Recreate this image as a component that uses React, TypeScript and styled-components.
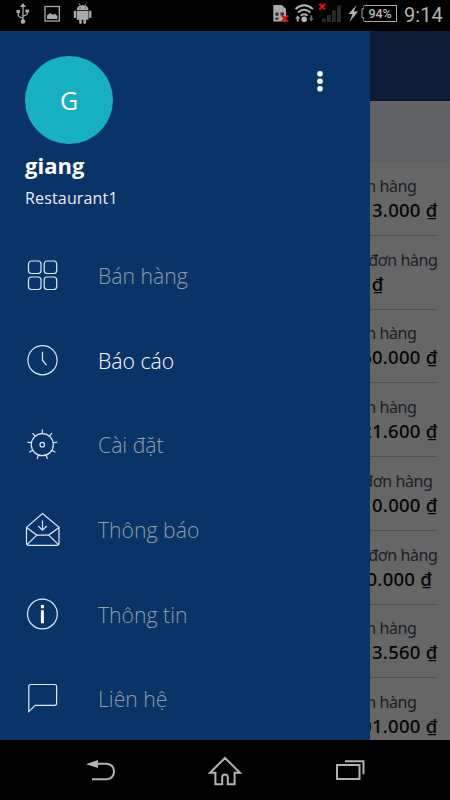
import React from "react";
import styled, { createGlobalStyle } from "styled-components";

const Global = createGlobalStyle`
  * { box-sizing: border-box; }
  body { margin: 0; background: #000; font-family: "Open Sans", "Noto Sans", sans-serif; }
`;

const Screen = styled.div`
  width: 450px;
  height: 800px;
  display: flex;
  flex-direction: column;
  overflow: hidden;
  background: #000;
`;

const StatusBar = styled.header`
  height: 31px;
  flex: none;
  display: flex;
  justify-content: space-between;
`;

const StatusIcons = styled.svg`
  display: block;
  height: 31px;
  flex: none;
`;

const StatusRight = styled.div`
  display: flex;
`;

const Clock = styled.time`
  width: 46px;
  font: 400 20px/30px Roboto, sans-serif;
  letter-spacing: 0.1px;
  color: #b4b4b4;
`;

const Battery = styled.div`
  width: 33px;
  height: 17px;
  margin: 5px 7px 0 0;
  border: 1px solid #aaa;
  border-left-width: 0;
  border-radius: 1px;
  font: 500 12.5px/16px Roboto, sans-serif;
  letter-spacing: -0.2px;
  text-align: center;
  color: #bcbcbc;
`;

const Main = styled.main`
  height: 709px;
  flex: none;
  display: flex;
`;

const Drawer = styled.aside`
  width: 370px;
  flex: none;
  background: #0a3467;
`;

const Profile = styled.section`
  height: 202px;
  display: flex;
  justify-content: space-between;
  padding: 25px 46px 0 25px;
  color: #fff;
`;

const Avatar = styled.div`
  width: 88px;
  height: 88px;
  border-radius: 50%;
  background: #16b0c1;
  font-size: 25px;
  line-height: 89px;
  text-align: center;
`;

const Name = styled.div`
  margin-top: 6px;
  font-size: 22px;
  line-height: 30px;
  font-weight: 700;
`;

const Place = styled.div`
  margin-top: 6px;
  font-size: 16px;
  line-height: 24px;
  letter-spacing: 0.16px;
  color: #e9eef6;
`;

const More = styled.svg`
  width: 8px;
  height: 22px;
  margin-top: 14px;
`;

const Item = styled.a<{ $active?: boolean }>`
  height: 84.7px;
  display: flex;
  align-items: center;
  gap: 37px;
  padding-left: 24px;
  font-size: 21.2px;
  font-weight: 300;
  white-space: nowrap;
  color: ${(p) => (p.$active ? "#ffffff" : "#929ca6")};
`;

const ItemIcon = styled.svg`
  width: 37px;
  height: 37px;
  flex: none;
  fill: none;
  stroke: #dfe8f6;
  stroke-width: 1.2;
`;

const Backdrop = styled.section`
  width: 80px;
  overflow: hidden;
  background: #666;
`;

const AppBar = styled.div`
  height: 70px;
  background: #0d1c36;
  border-bottom: 1px solid #061334;
`;

const FilterBand = styled.div`
  height: 61px;
  background: #616264;
  border-bottom: 1px solid #5d5d5e;
`;

const Order = styled.div`
  height: 73.75px;
  width: 67px;
  padding-top: 11.8px;
  border-bottom: 1px solid #505050;
`;

const Line = styled.div<{ $end: number }>`
  width: ${(p) => p.$end}px;
  display: flex;
  justify-content: flex-end;
  white-space: pre;
`;

const Label = styled(Line)`
  font: 400 16px/24px "Noto Sans", sans-serif;
  letter-spacing: -0.4px;
  color: #191e27;
`;

const Amount = styled(Line)`
  font: 500 18.5px/23px "Noto Sans", sans-serif;
  letter-spacing: 0.25px;
  color: #050505;
`;

const NavBar = styled.footer`
  height: 60px;
  flex: none;
`;

const NavIcons = styled.svg`
  display: block;
  fill: none;
  stroke: #b2b2b2;
  stroke-width: 2;
`;

const teeth = Array.from({ length: 9 }, (_, i) => i * 40);

const menu = [
  {
    text: "Bán hàng",
    icon: (
      <>
        <rect x="4.5" y="4" width="12.5" height="12.5" rx="3" />
        <rect x="20.2" y="4" width="12.5" height="12.5" rx="3" />
        <rect x="4.5" y="20" width="12.5" height="12.5" rx="3" />
        <rect x="20.2" y="20" width="12.5" height="12.5" rx="3" />
      </>
    ),
  },
  {
    text: "Báo cáo",
    active: true,
    icon: (
      <>
        <circle cx="18.5" cy="18.2" r="14.6" />
        <path d="M18.5 9.7v8.5l4 5" />
      </>
    ),
  },
  {
    text: "Cài đặt",
    icon: (
      <>
        <circle cx="18.3" cy="18.7" r="11" />
        <circle cx="18.3" cy="18.7" r="2.3" />
        {teeth.map((a) => (
          <path key={a} d="M18.3 7.7V3.6" transform={`rotate(${a} 18.3 18.7)`} />
        ))}
      </>
    ),
  },
  {
    text: "Thông báo",
    icon: (
      <>
        <path d="M2.5 16.4 18.5 2.5 35 16.4V32q0 2.3-2.3 2.3H4.8Q2.5 34.3 2.5 32ZM2.5 16.4l10.3 7.7h11.9L35 16.4M3 33.6l9.8-9.5M34.5 33.6l-9.8-9.5" />
        <path d="M18.5 9.6v9M14.2 15l4.3 4.2 4.3-4.2" />
      </>
    ),
  },
  {
    text: "Thông tin",
    icon: (
      <>
        <circle cx="18.4" cy="18" r="14.9" />
        <path d="M18.4 9v3.3M18.4 14.2v13" stroke="#fff" strokeWidth="3" />
      </>
    ),
  },
  {
    text: "Liên hệ",
    icon: (
      <path d="M6.8 4.5h23.8q2 0 2 2v16.8q0 2-2 2H11.2L4.8 31.6V6.5q0-2 2-2Z" />
    ),
  },
];

const orders = [
  { label: "n hàng", labelEnd: 46.5, amount: "3.000 ₫", end: 67.5 },
  { label: "đơn hàng", labelEnd: 67.5, amount: "₫", end: 13.5 },
  { label: "n hàng", labelEnd: 46.5, amount: "60.000 ₫", end: 67.5 },
  { label: "n hàng", labelEnd: 46.5, amount: "21.600 ₫", end: 67.5 },
  { label: "đơn hàng", labelEnd: 62.5, amount: "0.000 ₫", end: 67.5 },
  { label: "đơn hàng", labelEnd: 67.5, amount: "0.000 ₫", end: 62 },
  { label: "n hàng", labelEnd: 46.5, amount: "3.560 ₫", end: 67.5 },
  { label: "n hàng", labelEnd: 46.5, amount: "01.000 ₫", end: 67.5 },
];

export default function App() {
  return (
    <Screen>
      <Global />
      <StatusBar>
        <StatusIcons width="100" viewBox="0 0 100 31">
          <g fill="none" stroke="#aaa" strokeWidth="1.3">
            <path d="M23 6v16M18.3 11v4.2q0 2 4.7 2.7M27.3 10v3.3q0 2-4.3 2.7" />
            <rect x="45" y="6.5" width="14.3" height="14.5" />
          </g>
          <g fill="#aaa">
            <path d="m23 3 3 4h-6zM16.5 10h3.5v3h-3.5zM25.5 9.5H29v3h-3.5z" />
            <circle cx="23" cy="21.5" r="2.3" />
            <path d="M47 19v-3.5l3-2.5 3 1.8 2-1 2.5 2.2v3z" />
            <path d="M76.7 10q0-4.7 5.9-4.7T88.5 10zM76.7 10.8h11.8v9H86v3.5q-1.5 1.5-2.6 0v-3.5h-1.6v3.5q-1.4 1.5-2.6 0v-3.5h-2.5zM73.8 11q1.2-1 2.3 0v6.5q-1.1 1-2.3 0zM89.1 11q1.2-1 2.3 0v6.5q-1.1 1-2.3 0z" />
          </g>
          <path d="m79 3.5 1.3 2M86.3 3.5 85 5.5" stroke="#aaa" />
          <path d="M79.5 8h1M84.7 8h1" stroke="#111" />
        </StatusIcons>
        <StatusRight>
          <StatusIcons width="102" viewBox="262 0 102 31">
            <path fill="#aaa" d="M273.3 5h8.5l4.2 4v12.5h-12.7z" />
            <path d="M275.3 12.5h3.2v3.2h-3.2zM275.3 17.5h3.2v2.3h-3.2zM280.5 12.5h3.5v3h-3.5z" fill="#333" />
            <path d="m282 15.5 6 6M288 15.5l-6 6M319.3 4l5.7 5.5M325 4l-5.7 5.5" stroke="#d50c12" strokeWidth="2.3" />
            <g fill="none" stroke="#b4b4b4" strokeWidth="1.9">
              <path d="M295.5 9q8.7-7.7 17.4 0M298 12.5q6.2-5.3 12.4 0M300.7 15.7q3.5-2.8 7 0" />
            </g>
            <circle cx="304.2" cy="19.3" r="2.8" fill="#b4b4b4" />
            <path d="m297.7 15.5 2.5 3h-1.5v3h-2v-3h-1.5z" fill="#aaa" />
            <path d="m311.3 21.5-2.5-3h1.5v-3h2v3h1.5z" fill="#666" />
            <path d="M322 18.5h3.7V22H322zM327 15h3.7v7H327zM332 10.5h3.7V22H332zM337 5.5h4V22h-4z" fill="#2b2b2b" />
            <path d="m356.5 5-8 9h4L349.5 22l8.5-10.5h-4.2z" fill="#b4b4b4" />
            <path d="M364 5.5v3.3h-2v9h2v3.7" fill="none" stroke="#aaa" />
          </StatusIcons>
          <Battery>94%</Battery>
          <Clock>9:14</Clock>
        </StatusRight>
      </StatusBar>
      <Main>
        <Drawer>
          <Profile>
            <div>
              <Avatar>G</Avatar>
              <Name>giang</Name>
              <Place>Restaurant1</Place>
            </div>
            <More viewBox="0 0 8 22" fill="#fff">
              <circle cx="4" cy="3.8" r="2.8" />
              <circle cx="4" cy="11.2" r="2.8" />
              <circle cx="4" cy="18.7" r="2.8" />
            </More>
          </Profile>
          <nav>
            {menu.map((m) => (
              <Item key={m.text} $active={m.active}>
                <ItemIcon viewBox="0 0 37 37">{m.icon}</ItemIcon>
                <span>{m.text}</span>
              </Item>
            ))}
          </nav>
        </Drawer>
        <Backdrop>
          <AppBar />
          <FilterBand />
          {orders.map((o, i) => (
            <Order key={i}>
              <Label $end={o.labelEnd}>{o.label}</Label>
              <Amount $end={o.end}>{o.amount}</Amount>
            </Order>
          ))}
        </Backdrop>
      </Main>
      <NavBar>
        <NavIcons width="450" height="60" viewBox="0 740 450 60">
          <path d="M92 779.3h14.5q7.3-.8 7.5-7.6-.2-7.3-7.5-7.9H96" />
          <path d="m86 764.2 12-4.1v8z" fill="#b2b2b2" stroke="none" />
          <path d="M225 758 210 772.7h5.4v11.5h6.8v-7q0-2.8 2.8-2.8t2.8 2.8v7h6.8v-11.5h5.4z" />
          <path d="M337 765h22.5v14H337zM345 761.3h18.5v13" />
        </NavIcons>
      </NavBar>
    </Screen>
  );
}
